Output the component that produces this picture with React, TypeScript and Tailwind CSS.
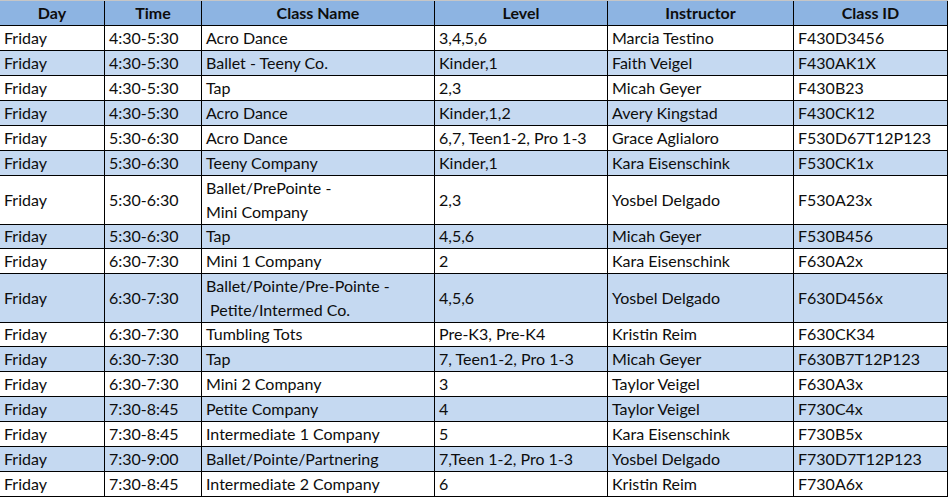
const rows: string[][] = [
    ["Friday", "4:30-5:30", "Acro Dance", "3,4,5,6", "Marcia Testino", "F430D3456"],
    ["Friday", "4:30-5:30", "Ballet - Teeny Co.", "Kinder,1", "Faith Veigel", "F430AK1X"],
    ["Friday", "4:30-5:30", "Tap", "2,3", "Micah Geyer", "F430B23"],
    ["Friday", "4:30-5:30", "Acro Dance", "Kinder,1,2", "Avery Kingstad", "F430CK12"],
    ["Friday", "5:30-6:30", "Acro Dance", "6,7, Teen1-2, Pro 1-3", "Grace Aglialoro", "F530D67T12P123"],
    ["Friday", "5:30-6:30", "Teeny Company", "Kinder,1", "Kara Eisenschink", "F530CK1x"],
    ["Friday", "5:30-6:30", "Ballet/PrePointe -\nMini Company", "2,3", "Yosbel Delgado", "F530A23x"],
    ["Friday", "5:30-6:30", "Tap", "4,5,6", "Micah Geyer", "F530B456"],
    ["Friday", "6:30-7:30", "Mini 1 Company", "2", "Kara Eisenschink", "F630A2x"],
    ["Friday", "6:30-7:30", "Ballet/Pointe/Pre-Pointe -\n\u00a0Petite/Intermed Co.", "4,5,6", "Yosbel Delgado", "F630D456x"],
    ["Friday", "6:30-7:30", "Tumbling Tots", "Pre-K3, Pre-K4", "Kristin Reim", "F630CK34"],
    ["Friday", "6:30-7:30", "Tap", "7, Teen1-2, Pro 1-3", "Micah Geyer", "F630B7T12P123"],
    ["Friday", "6:30-7:30", "Mini 2 Company", "3", "Taylor Veigel", "F630A3x"],
    ["Friday", "7:30-8:45", "Petite Company", "4", "Taylor Veigel", "F730C4x"],
    ["Friday", "7:30-8:45", "Intermediate 1 Company", "5", "Kara Eisenschink", "F730B5x"],
    ["Friday", "7:30-9:00", "Ballet/Pointe/Partnering", "7,Teen 1-2, Pro 1-3", "Yosbel Delgado", "F730D7T12P123"],
    ["Friday", "7:30-8:45", "Intermediate 2 Company", "6", "Kristin Reim", "F730A6x"],
]

const headers = ["Day", "Time", "Class Name", "Level", "Instructor", "Class ID"]

const cols = "grid grid-cols-[104px_97px_233px_173px_186px_155px]"

const App = () => {
    return (
        <div className="w-[948px] h-[497px] overflow-hidden bg-white text-[#0d0d0d] text-[16px]" style={{ fontFamily: "Lato, 'Open Sans', sans-serif" }}>
            <div className={`${cols} h-[26px] bg-[#8db4e2] border-t border-[#c6c6c6]`}>
                {headers.map((h, i) => (
                    <div key={i} className={`flex items-center justify-center font-bold border-b border-black ${i > 0 ? "border-l" : ""} ${i === 5 ? "border-r" : ""} border-l-black border-r-black`}>
                        {h}
                    </div>
                ))}
            </div>

            {rows.map((row, r) => {
                const tall = row[2].includes("\n")
                return (
                    <div key={r} className={`${cols} ${tall ? "h-[48px]" : "h-[25px]"} ${r % 2 === 1 ? "bg-[#c5d9f1]" : "bg-white"}`}>
                        {row.map((cell, c) => (
                            <div key={c} className={`flex items-center pl-[4px] border-b border-black whitespace-pre leading-[24px] ${c > 0 ? "border-l" : ""} ${c === 5 ? "border-r" : ""}`}>
                                {cell}
                            </div>
                        ))}
                    </div>
                )
            })}
        </div>
    )
}

export default App
